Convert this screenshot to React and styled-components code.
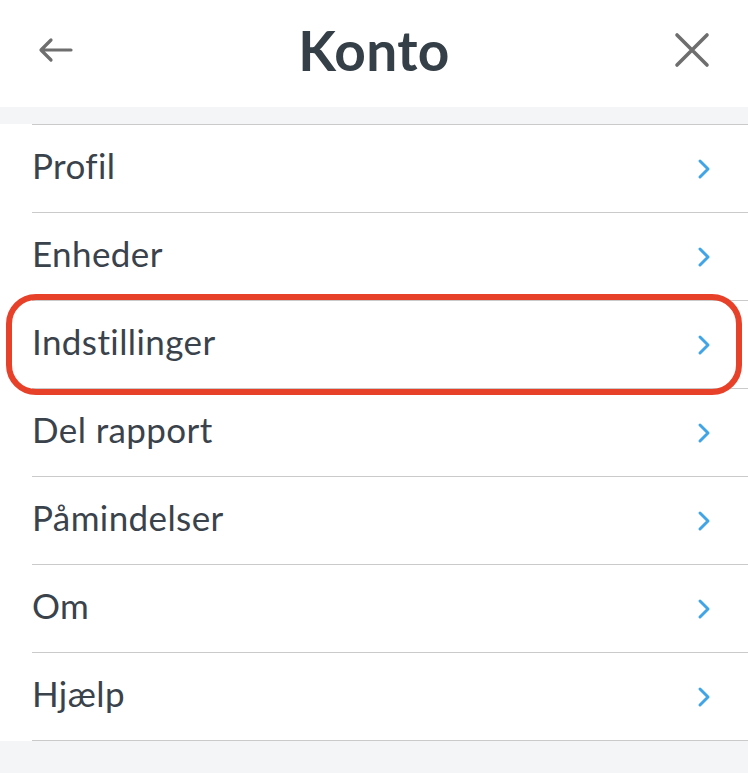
import React from 'react';
import styled, { createGlobalStyle } from 'styled-components';

const GlobalStyle = createGlobalStyle`
  body {
    margin: 0;
    background: #f4f5f7;
    font-family: 'Lato', 'Noto Sans', sans-serif;
  }
`;

const Page = styled.div`
  width: 748px;
  min-height: 773px;
  background: #f4f5f7;
`;

const Header = styled.header`
  height: 107px;
  background: #fff;
  display: flex;
  align-items: center;
  justify-content: space-between;
  padding: 0 36px 8px;
  box-sizing: border-box;
`;

const Title = styled.h1`
  margin: 0;
  font-size: 55px;
  font-weight: 700;
  color: #353f47;
  letter-spacing: 0.4px;
`;

const IconButton = styled.button`
  border: 0;
  background: none;
  padding: 0;
  width: 40px;
  height: 40px;
  display: flex;
  align-items: center;
  justify-content: center;
  color: #6e6e6e;
`;

const List = styled.ul`
  list-style: none;
  margin: 17px 0 0;
  padding: 0 0 0 32px;
  background: #fff;
`;

const Item = styled.li`
  position: relative;
  height: 87px;
  display: flex;
  align-items: center;
  justify-content: space-between;
  padding-right: 37px;
  border-top: ${p => (p.$first ? '1px solid #cacaca' : '0')};
  border-bottom: 1px solid #cacaca;
`;

const Label = styled.span`
  font-size: 35px;
  font-weight: 400;
  color: #3a434b;
  letter-spacing: 0.4px;
  margin-bottom: 8px;
`;

const Highlight = styled.div`
  position: absolute;
  top: -7px;
  bottom: -7px;
  left: -26px;
  right: 6px;
  border: 6px solid #e8412a;
  border-radius: 30px;
  pointer-events: none;
`;

const Chevron = () => (
  <svg width="14" height="22" viewBox="0 0 14 22">
    <polyline points="3,3 11,11 3,19" fill="none" stroke="#3fa5e6" strokeWidth="3" strokeLinecap="round" strokeLinejoin="round" />
  </svg>
);

const items = ['Profil', 'Enheder', 'Indstillinger', 'Del rapport', 'Påmindelser', 'Om', 'Hjælp'];

export default function App() {
  return (
    <Page>
      <GlobalStyle />
      <Header>
        <IconButton aria-label="Tilbage">
          <svg width="36" height="26" viewBox="0 0 36 26">
            <path d="M33 13H4M13 3L3 13l10 10" fill="none" stroke="currentColor" strokeWidth="3.2" strokeLinecap="round" strokeLinejoin="round" />
          </svg>
        </IconButton>
        <Title>Konto</Title>
        <IconButton aria-label="Luk">
          <svg width="36" height="36" viewBox="0 0 36 36">
            <path d="M3 3l30 30M33 3L3 33" fill="none" stroke="currentColor" strokeWidth="3.6" strokeLinecap="round" />
          </svg>
        </IconButton>
      </Header>
      <List>
        {items.map((label, i) => (
          <Item key={label} $first={i === 0}>
            <Label>{label}</Label>
            <Chevron />
            {label === 'Indstillinger' && <Highlight />}
          </Item>
        ))}
      </List>
    </Page>
  );
}
